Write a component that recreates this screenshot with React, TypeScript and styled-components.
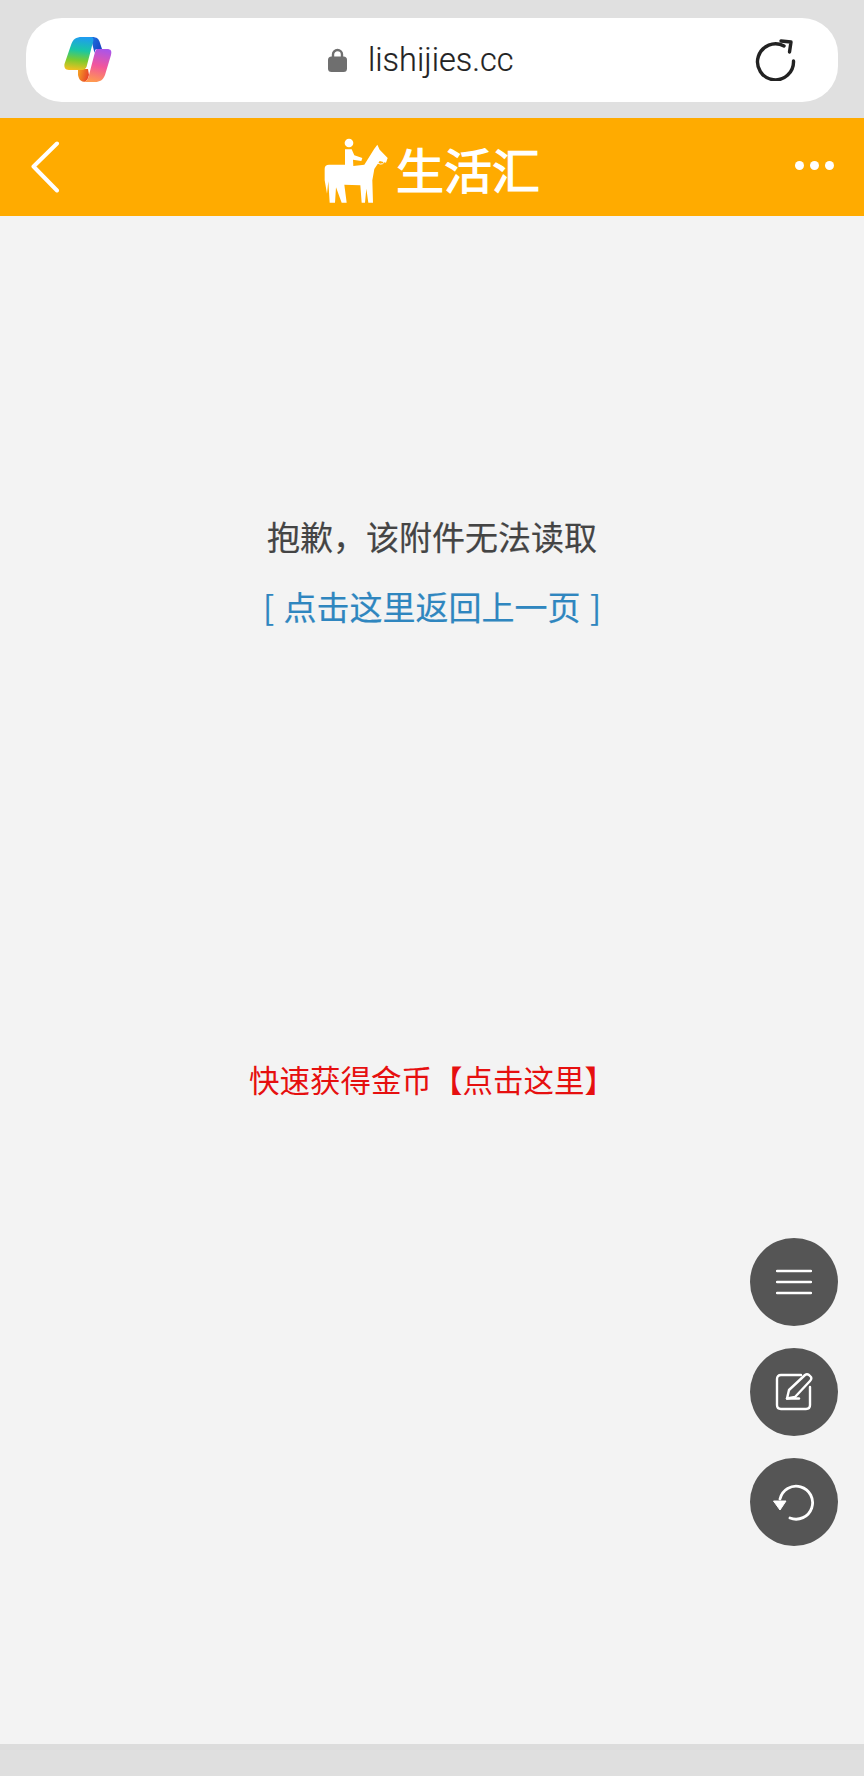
import React from "react";
import styled, { createGlobalStyle } from "styled-components";

const Global = createGlobalStyle`
  html, body { margin: 0; padding: 0; background: #f3f3f3; }
  * { box-sizing: border-box; }
`;

const Page = styled.div`
  position: relative;
  width: 864px;
  height: 1776px;
  display: flex;
  flex-direction: column;
  overflow: hidden;
  background: #f3f3f3;
  font-family: "Noto Sans CJK SC", "Noto Sans", sans-serif;
`;

const BrowserBar = styled.div`
  height: 118px;
  flex: none;
  padding: 18px 26px 16px;
  background: #e0e0e0;
`;

const AddressPill = styled.div`
  height: 84px;
  border-radius: 36px;
  background: #ffffff;
  display: grid;
  grid-template-columns: 264px auto 1fr;
  align-items: center;
  padding: 0 41px 0 38px;
`;

const Address = styled.div`
  display: flex;
  align-items: center;
  gap: 21px;
  font-family: Roboto, "Liberation Sans", sans-serif;
  font-size: 32.5px;
  font-weight: 300;
  color: #222222;
  -webkit-text-stroke: 0.2px #222222;
`;

const ReloadSlot = styled.div`
  display: flex;
  justify-content: flex-end;
`;

const Header = styled.header`
  height: 98px;
  flex: none;
  background: #ffab00;
  display: grid;
  grid-template-columns: 1fr auto 1fr;
  align-items: center;
  padding: 0 30px;
`;

const Logo = styled.div`
  display: flex;
  align-items: center;
  gap: 7px;
`;

const LogoMark = styled.div`
  margin-top: 7px;
`;

const LogoText = styled.span`
  font-size: 48px;
  line-height: 56px;
  font-weight: 400;
  color: #ffffff;
  -webkit-text-stroke: 1.2px #ffffff;
  margin-top: 2px;
`;

const Dots = styled.div`
  display: flex;
  justify-content: flex-end;
  gap: 6px;
  margin-top: -4px;
`;

const Dot = styled.span`
  width: 9px;
  height: 9px;
  border-radius: 50%;
  background: #ffffff;
`;

const Main = styled.main`
  flex: 1;
  padding-top: 285px;
  text-align: center;
  font-size: 33px;
`;

const Message = styled.p`
  margin: 0;
  line-height: 70px;
  color: #444444;
  -webkit-text-stroke: 0.2px #444444;
`;

const BackLink = styled.a`
  display: block;
  line-height: 70px;
  color: #2f86bf;
  text-decoration: none;
  word-spacing: 2px;
  -webkit-text-stroke: 0.2px #2f86bf;
`;

const Promo = styled.a`
  display: block;
  margin-top: 403px;
  line-height: 70px;
  font-size: 30.5px;
  color: #e60f0f;
  text-decoration: none;
`;

const BottomBar = styled.div`
  height: 32px;
  flex: none;
  background: #dfdfdf;
  border-top: 6px solid #dcdcdc;
`;

const FabStack = styled.div`
  position: absolute;
  right: 26px;
  top: 1238px;
  display: flex;
  flex-direction: column;
  gap: 22px;
`;

const Fab = styled.button`
  width: 88px;
  height: 88px;
  padding: 0;
  border: 0;
  border-radius: 50%;
  background: #555555;
  display: flex;
  align-items: center;
  justify-content: center;
`;

const CopilotLogo = () => (
  <svg width="48" height="46" viewBox="0 0 48 46" style={{ display: "block" }}>
    <defs>
      <linearGradient id="cpL" x1="0.5" y1="0" x2="0.4" y2="1">
        <stop offset="0" stopColor="#1f9cf0" />
        <stop offset="0.4" stopColor="#19c7a4" />
        <stop offset="0.7" stopColor="#7ccb2f" />
        <stop offset="1" stopColor="#f0c020" />
      </linearGradient>
      <linearGradient id="cpR" x1="0.6" y1="0" x2="0.4" y2="1">
        <stop offset="0" stopColor="#ab55e8" />
        <stop offset="0.5" stopColor="#f2559c" />
        <stop offset="1" stopColor="#ff9a50" />
      </linearGradient>
      <linearGradient id="cpT" x1="0" y1="0" x2="1" y2="0.6">
        <stop offset="0" stopColor="#1f7ee6" />
        <stop offset="1" stopColor="#1a44c4" />
      </linearGradient>
      <linearGradient id="cpB" x1="0" y1="0" x2="1" y2="0.3">
        <stop offset="0" stopColor="#f5a623" />
        <stop offset="1" stopColor="#e8452a" />
      </linearGradient>
    </defs>
    <path d="M24 0 H28 C33 0 35 2 36 6 L38 12 H33 C31 12 31 14 30.5 16 L29 10 C28 5 27 2 24 0Z" fill="url(#cpT)" />
    <path d="M14 32 H24 L25 38 C24 42 23 44 20 45 H22 C16 45 15 42 14 38Z" fill="url(#cpB)" />
    <path d="M18 0 H26 C29 0 30 1 29 5 L22.5 30 C21.5 32 20 33 18 33 H5 C1 33 0 30 0.5 27 L7 8 C9 2 12 0 18 0Z" fill="url(#cpL)" />
    <path d="M33 12 H43 C47 12 48 14 47 18 L41 38 C39 43 36 45 31 45 H20 C23 44 24 42 25 38 L31 15 C32 13 32 12 33 12Z" fill="url(#cpR)" />
  </svg>
);

const LockIcon = () => (
  <svg width="19" height="24" viewBox="0 0 19 24" style={{ display: "block" }}>
    <path d="M5 10 V6.5 a4.5 4.5 0 0 1 9 0 V10" fill="none" stroke="#6f6f6f" strokeWidth="2.4" />
    <rect x="0" y="8.5" width="19" height="15.5" rx="3.5" fill="#6f6f6f" />
  </svg>
);

const ReloadIcon = () => (
  <svg width="42" height="42" viewBox="0 0 42 42" fill="none" style={{ display: "block" }}>
    <path d="M29 7 A18 18 0 1 0 38.5 22" stroke="#222222" strokeWidth="3.4" strokeLinecap="round" />
    <path d="M26 2 L36 3 L34.5 13" stroke="#222222" strokeWidth="3.4" strokeLinecap="round" strokeLinejoin="round" />
  </svg>
);

const BackIcon = () => (
  <svg width="30" height="52" viewBox="0 0 30 52" fill="none" style={{ display: "block" }}>
    <path d="M27 2.5 L3.5 25.5 L27 49.5" stroke="#ffffff" strokeWidth="4" strokeLinecap="round" strokeLinejoin="round" />
  </svg>
);

const RiderIcon = () => (
  <svg width="65" height="66" viewBox="45 38 195 198" fill="#ffffff" style={{ display: "block" }}>
    <circle cx="120" cy="53" r="13" />
    <path d="M108 72 H128 L136 90 L160 98 L157 107 L132 103 L133 122 H108Z" />
    <path d="M60 118 H108 L133 122 L166 118 L195 72 L205 58 L212 73 L236 98 L231 112 L212 107 L196 131 L190 165 L192 232 H178 L172 190 L168 232 H158 L154 180 L106 178 L113 232 H98 L81 186 L78 232 H62 L58 168 L54 205 L47 165 L47 130 C47 122 52 118 60 118Z" />
    <path d="M196 105 Q216 125 226 110" fill="none" stroke="#ffffff" strokeWidth="3" />
  </svg>
);

const MenuIcon = () => (
  <svg width="36" height="26" viewBox="0 0 36 26" style={{ display: "block" }}>
    <path d="M1 2 H35 M1 13 H35 M1 24 H35" stroke="#ffffff" strokeWidth="2.4" strokeLinecap="round" />
  </svg>
);

const EditIcon = () => (
  <svg width="38" height="38" viewBox="0 0 38 38" fill="none" style={{ display: "block" }}>
    <path d="M26 2 H6 Q2 2 2 6 V32 Q2 36 6 36 H31 Q35 36 35 32 V14" stroke="#ffffff" strokeWidth="2.4" strokeLinecap="round" />
    <path d="M12 25.5 L14 17 L30 2 Q32 0.5 34 2 L36 4 Q37 6 35 8 L20 24Z" stroke="#ffffff" strokeWidth="2.4" strokeLinejoin="round" />
    <path d="M12 25.5 H24" stroke="#ffffff" strokeWidth="2.4" strokeLinecap="round" />
  </svg>
);

const UndoIcon = () => (
  <svg width="42" height="38" viewBox="0 0 42 38" fill="none" style={{ display: "block" }}>
    <path d="M17 35 A16.5 16.5 0 1 0 7 16" stroke="#ffffff" strokeWidth="2.8" strokeLinecap="round" />
    <path d="M0.5 18 H13 L7 27Z" fill="#ffffff" stroke="#ffffff" strokeWidth="1" strokeLinejoin="round" />
  </svg>
);

export default function App() {
  return (
    <Page>
      <Global />
      <BrowserBar>
        <AddressPill>
          <CopilotLogo />
          <Address>
            <LockIcon />
            <span>lishijies.cc</span>
          </Address>
          <ReloadSlot>
            <ReloadIcon />
          </ReloadSlot>
        </AddressPill>
      </BrowserBar>
      <Header>
        <BackIcon />
        <Logo>
          <LogoMark>
            <RiderIcon />
          </LogoMark>
          <LogoText>生活汇</LogoText>
        </Logo>
        <Dots>
          <Dot />
          <Dot />
          <Dot />
        </Dots>
      </Header>
      <Main>
        <Message>{"抱歉\uFF0C该附件无法读取"}</Message>
        <BackLink href="#">[ 点击这里返回上一页 ]</BackLink>
        <Promo href="#">快速获得金币【点击这里】</Promo>
      </Main>
      <BottomBar />
      <FabStack>
        <Fab>
          <MenuIcon />
        </Fab>
        <Fab>
          <EditIcon />
        </Fab>
        <Fab>
          <UndoIcon />
        </Fab>
      </FabStack>
    </Page>
  );
}
